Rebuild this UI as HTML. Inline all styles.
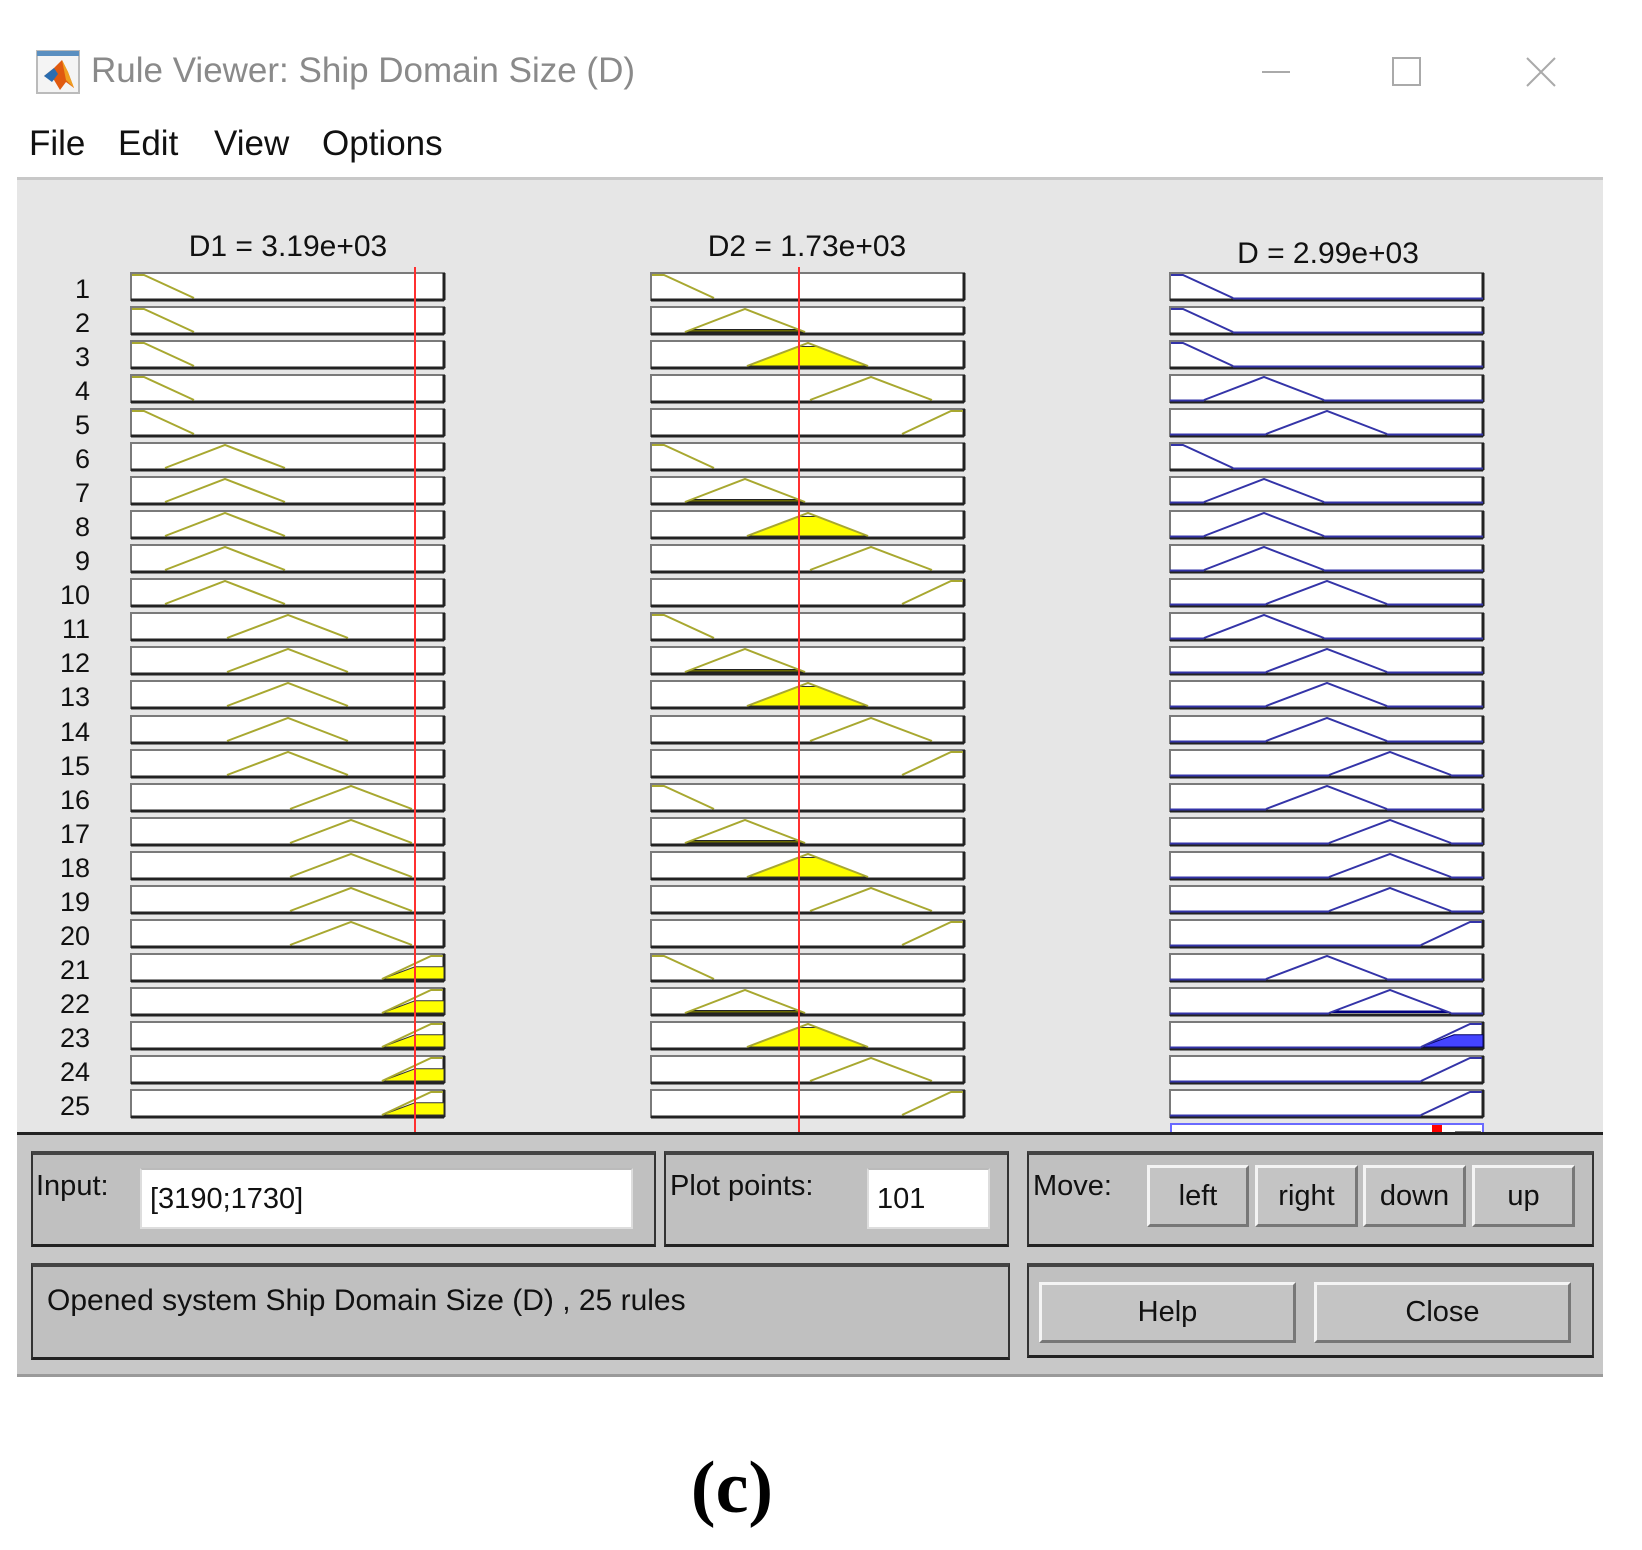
<!DOCTYPE html>
<html><head><meta charset="utf-8">
<style>
*{margin:0;padding:0;box-sizing:border-box}
body{width:1642px;height:1550px;background:#fff;position:relative;overflow:hidden;font-family:"Liberation Sans",Arial,sans-serif}
.a{position:absolute}
.grp{position:absolute;background:#c0c0c0;border:2px solid #333;border-top:4px solid #444;border-bottom:3px solid #222}
.fld{position:absolute;background:#fff;border:2px solid #ddd;border-top-color:#bbb;font-size:29px;color:#111;padding-left:8px;line-height:58px}
.btn{position:absolute;background:#c4c4c4;border:3px solid;border-color:#f4f4f4 #777 #777 #f4f4f4;font-size:29px;color:#111;text-align:center}
.lbl{position:absolute;font-size:29px;color:#111}
</style></head><body>
<svg class="a" style="left:36px;top:50px" width="44" height="44" viewBox="0 0 44 44">
<rect x="1" y="1" width="42" height="42" fill="#f4f4f4" stroke="#bbb" stroke-width="2"/>
<rect x="1" y="1" width="42" height="5" fill="#5a8fc0"/>
<path d="M8 26 L18 18 L26 10 L32 22 L38 38 L30 32 L24 40 L18 30 Z" fill="#e05a10"/>
<path d="M8 26 L18 18 L22 24 L16 32 Z" fill="#2a6db0"/>
<path d="M26 10 L32 22 L38 38 L30 30 Z" fill="#f0a020"/>
</svg>
<div class="a" style="left:91px;top:49px;font-size:35px;color:#8a8a8a;line-height:44px">Rule Viewer: Ship Domain Size (D)</div>
<svg class="a" style="left:1250px;top:50px" width="330" height="45">
<path d="M12 22H40" stroke="#aaa" stroke-width="2"/>
<rect x="143" y="8" width="27" height="27" fill="none" stroke="#aaa" stroke-width="2"/>
<path d="M277 8L305 36M305 8L277 36" stroke="#aaa" stroke-width="2"/>
</svg>
<div class="a" style="left:29px;top:123px;font-size:35px;color:#111;line-height:42px">File</div>
<div class="a" style="left:118px;top:123px;font-size:35px;color:#111;line-height:42px">Edit</div>
<div class="a" style="left:214px;top:123px;font-size:35px;color:#111;line-height:42px">View</div>
<div class="a" style="left:322px;top:123px;font-size:35px;color:#111;line-height:42px">Options</div>
<div class="a" style="left:17px;top:177px;width:1586px;height:3px;background:#c8c8c8"></div>
<div class="a" style="left:17px;top:180px;width:1586px;height:954px;background:#e6e6e6"></div>
<svg class="a" style="left:0;top:0" width="1642" height="1140">
<defs>
<g id="bx"><rect x="0" y="0" width="313" height="27" fill="#fff" stroke="#7a7a7a" stroke-width="2"/><path d="M0 27H313M313 0V27" stroke="#222" stroke-width="3" fill="none"/></g>
<path id="z" d="M1 2H13L63 25"/>
<path id="ma" d="M34 25L94 2L154 25"/>
<path id="mb" d="M96 25L157 2L217 25"/>
<path id="mc" d="M159 25L220 2L281 25"/>
<path id="r" d="M251 25L300 2H312"/>
<polygon id="fr" points="251,25 284,12.8 313,12.8 313,25" fill="#ffff00" stroke="#333" stroke-width="1"/>
<polygon id="fa" points="34,25 40,22.5 148,22.5 154,25" fill="#6a6a00" stroke="#222" stroke-width="1"/>
<polygon id="fb" points="96,25 148,5.5 166,5.5 217,25" fill="#ffff00" stroke="#333" stroke-width="1"/>
<path id="bz" d="M63 25.5H313"/>
<path id="ba" d="M154 25.5H313M0 25.5H34"/>
<path id="bb" d="M217 25.5H313M0 25.5H96"/>
<path id="bc" d="M281 25.5H313M0 25.5H159"/>
<path id="br" d="M0 25.5H251"/>
</defs>
<g font-family="Liberation Sans, Arial, sans-serif" font-size="30" fill="#111">
<text x="288" y="256" text-anchor="middle">D1 = 3.19e+03</text>
<text x="807" y="256" text-anchor="middle">D2 = 1.73e+03</text>
<text x="1328" y="263" text-anchor="middle">D = 2.99e+03</text>
</g>
<g font-family="Liberation Sans, Arial, sans-serif" font-size="27" fill="#111" text-anchor="end">
<text x="90" y="298">1</text><text x="90" y="332">2</text><text x="90" y="366">3</text><text x="90" y="400">4</text><text x="90" y="434">5</text>
<text x="90" y="468">6</text><text x="90" y="502">7</text><text x="90" y="536">8</text><text x="90" y="570">9</text><text x="90" y="604">10</text>
<text x="90" y="638">11</text><text x="90" y="672">12</text><text x="90" y="706">13</text><text x="90" y="741">14</text><text x="90" y="775">15</text>
<text x="90" y="809">16</text><text x="90" y="843">17</text><text x="90" y="877">18</text><text x="90" y="911">19</text><text x="90" y="945">20</text>
<text x="90" y="979">21</text><text x="90" y="1013">22</text><text x="90" y="1047">23</text><text x="90" y="1081">24</text><text x="90" y="1115">25</text>
</g>
<g>
<g transform="translate(0,273)"><use href="#bx" x="131"/><use href="#bx" x="651"/><use href="#bx" x="1170"/></g>
<g transform="translate(0,307)"><use href="#bx" x="131"/><use href="#bx" x="651"/><use href="#bx" x="1170"/></g>
<g transform="translate(0,341)"><use href="#bx" x="131"/><use href="#bx" x="651"/><use href="#bx" x="1170"/></g>
<g transform="translate(0,375)"><use href="#bx" x="131"/><use href="#bx" x="651"/><use href="#bx" x="1170"/></g>
<g transform="translate(0,409)"><use href="#bx" x="131"/><use href="#bx" x="651"/><use href="#bx" x="1170"/></g>
<g transform="translate(0,443)"><use href="#bx" x="131"/><use href="#bx" x="651"/><use href="#bx" x="1170"/></g>
<g transform="translate(0,477)"><use href="#bx" x="131"/><use href="#bx" x="651"/><use href="#bx" x="1170"/></g>
<g transform="translate(0,511)"><use href="#bx" x="131"/><use href="#bx" x="651"/><use href="#bx" x="1170"/></g>
<g transform="translate(0,545)"><use href="#bx" x="131"/><use href="#bx" x="651"/><use href="#bx" x="1170"/></g>
<g transform="translate(0,579)"><use href="#bx" x="131"/><use href="#bx" x="651"/><use href="#bx" x="1170"/></g>
<g transform="translate(0,613)"><use href="#bx" x="131"/><use href="#bx" x="651"/><use href="#bx" x="1170"/></g>
<g transform="translate(0,647)"><use href="#bx" x="131"/><use href="#bx" x="651"/><use href="#bx" x="1170"/></g>
<g transform="translate(0,681)"><use href="#bx" x="131"/><use href="#bx" x="651"/><use href="#bx" x="1170"/></g>
<g transform="translate(0,716)"><use href="#bx" x="131"/><use href="#bx" x="651"/><use href="#bx" x="1170"/></g>
<g transform="translate(0,750)"><use href="#bx" x="131"/><use href="#bx" x="651"/><use href="#bx" x="1170"/></g>
<g transform="translate(0,784)"><use href="#bx" x="131"/><use href="#bx" x="651"/><use href="#bx" x="1170"/></g>
<g transform="translate(0,818)"><use href="#bx" x="131"/><use href="#bx" x="651"/><use href="#bx" x="1170"/></g>
<g transform="translate(0,852)"><use href="#bx" x="131"/><use href="#bx" x="651"/><use href="#bx" x="1170"/></g>
<g transform="translate(0,886)"><use href="#bx" x="131"/><use href="#bx" x="651"/><use href="#bx" x="1170"/></g>
<g transform="translate(0,920)"><use href="#bx" x="131"/><use href="#bx" x="651"/><use href="#bx" x="1170"/></g>
<g transform="translate(0,954)"><use href="#bx" x="131"/><use href="#bx" x="651"/><use href="#bx" x="1170"/></g>
<g transform="translate(0,988)"><use href="#bx" x="131"/><use href="#bx" x="651"/><use href="#bx" x="1170"/></g>
<g transform="translate(0,1022)"><use href="#bx" x="131"/><use href="#bx" x="651"/><use href="#bx" x="1170"/></g>
<g transform="translate(0,1056)"><use href="#bx" x="131"/><use href="#bx" x="651"/><use href="#bx" x="1170"/></g>
<g transform="translate(0,1090)"><use href="#bx" x="131"/><use href="#bx" x="651"/><use href="#bx" x="1170"/></g>
</g>
<use href="#fr" x="131" y="954"/><use href="#fr" x="131" y="988"/><use href="#fr" x="131" y="1022"/><use href="#fr" x="131" y="1056"/><use href="#fr" x="131" y="1090"/>
<use href="#fa" x="651" y="307"/><use href="#fb" x="651" y="341"/>
<use href="#fa" x="651" y="477"/><use href="#fb" x="651" y="511"/>
<use href="#fa" x="651" y="647"/><use href="#fb" x="651" y="681"/>
<use href="#fa" x="651" y="818"/><use href="#fb" x="651" y="852"/>
<use href="#fa" x="651" y="988"/><use href="#fb" x="651" y="1022"/>
<polygon points="159,25 165,22.5 275,22.5 281,25" fill="#000080" transform="translate(1170,988)"/>
<polygon points="251,25 284,12.8 313,12.8 313,25" fill="#4444ff" stroke="#000060" stroke-width="1" transform="translate(1170,1022)"/>
<g stroke="#a8a830" stroke-width="2" fill="none">
<use href="#z" x="131" y="273"/><use href="#z" x="131" y="307"/><use href="#z" x="131" y="341"/><use href="#z" x="131" y="375"/><use href="#z" x="131" y="409"/>
<use href="#ma" x="131" y="443"/><use href="#ma" x="131" y="477"/><use href="#ma" x="131" y="511"/><use href="#ma" x="131" y="545"/><use href="#ma" x="131" y="579"/>
<use href="#mb" x="131" y="613"/><use href="#mb" x="131" y="647"/><use href="#mb" x="131" y="681"/><use href="#mb" x="131" y="716"/><use href="#mb" x="131" y="750"/>
<use href="#mc" x="131" y="784"/><use href="#mc" x="131" y="818"/><use href="#mc" x="131" y="852"/><use href="#mc" x="131" y="886"/><use href="#mc" x="131" y="920"/>
<use href="#r" x="131" y="954"/><use href="#r" x="131" y="988"/><use href="#r" x="131" y="1022"/><use href="#r" x="131" y="1056"/><use href="#r" x="131" y="1090"/>
<use href="#z" x="651" y="273"/><use href="#ma" x="651" y="307"/><use href="#mb" x="651" y="341"/><use href="#mc" x="651" y="375"/><use href="#r" x="651" y="409"/>
<use href="#z" x="651" y="443"/><use href="#ma" x="651" y="477"/><use href="#mb" x="651" y="511"/><use href="#mc" x="651" y="545"/><use href="#r" x="651" y="579"/>
<use href="#z" x="651" y="613"/><use href="#ma" x="651" y="647"/><use href="#mb" x="651" y="681"/><use href="#mc" x="651" y="716"/><use href="#r" x="651" y="750"/>
<use href="#z" x="651" y="784"/><use href="#ma" x="651" y="818"/><use href="#mb" x="651" y="852"/><use href="#mc" x="651" y="886"/><use href="#r" x="651" y="920"/>
<use href="#z" x="651" y="954"/><use href="#ma" x="651" y="988"/><use href="#mb" x="651" y="1022"/><use href="#mc" x="651" y="1056"/><use href="#r" x="651" y="1090"/>
</g>
<g stroke="#3434a8" stroke-width="2" fill="none">
<use href="#z" x="1170" y="273"/><use href="#bz" x="1170" y="273"/>
<use href="#z" x="1170" y="307"/><use href="#bz" x="1170" y="307"/>
<use href="#z" x="1170" y="341"/><use href="#bz" x="1170" y="341"/>
<use href="#ma" x="1170" y="375"/><use href="#ba" x="1170" y="375"/>
<use href="#mb" x="1170" y="409"/><use href="#bb" x="1170" y="409"/>
<use href="#z" x="1170" y="443"/><use href="#bz" x="1170" y="443"/>
<use href="#ma" x="1170" y="477"/><use href="#ba" x="1170" y="477"/>
<use href="#ma" x="1170" y="511"/><use href="#ba" x="1170" y="511"/>
<use href="#ma" x="1170" y="545"/><use href="#ba" x="1170" y="545"/>
<use href="#mb" x="1170" y="579"/><use href="#bb" x="1170" y="579"/>
<use href="#ma" x="1170" y="613"/><use href="#ba" x="1170" y="613"/>
<use href="#mb" x="1170" y="647"/><use href="#bb" x="1170" y="647"/>
<use href="#mb" x="1170" y="681"/><use href="#bb" x="1170" y="681"/>
<use href="#mb" x="1170" y="716"/><use href="#bb" x="1170" y="716"/>
<use href="#mc" x="1170" y="750"/><use href="#bc" x="1170" y="750"/>
<use href="#mb" x="1170" y="784"/><use href="#bb" x="1170" y="784"/>
<use href="#mc" x="1170" y="818"/><use href="#bc" x="1170" y="818"/>
<use href="#mc" x="1170" y="852"/><use href="#bc" x="1170" y="852"/>
<use href="#mc" x="1170" y="886"/><use href="#bc" x="1170" y="886"/>
<use href="#r" x="1170" y="920"/><use href="#br" x="1170" y="920"/>
<use href="#mb" x="1170" y="954"/><use href="#bb" x="1170" y="954"/>
<use href="#mc" x="1170" y="988"/><use href="#bc" x="1170" y="988"/>
<use href="#r" x="1170" y="1022"/><use href="#br" x="1170" y="1022"/>
<use href="#r" x="1170" y="1056"/><use href="#br" x="1170" y="1056"/>
<use href="#r" x="1170" y="1090"/><use href="#br" x="1170" y="1090"/>
</g>
<rect x="1171" y="1124" width="312" height="14" fill="#fff" stroke="#6a6aff" stroke-width="2"/>
<rect x="1432" y="1125" width="10" height="9" fill="#ff0000"/>
<rect x="1455" y="1131" width="26" height="3" fill="#777"/>
<path d="M415 267V1133M799 267V1133" stroke="#ff3030" stroke-width="2"/>
<rect x="17" y="1132" width="1586" height="3" fill="#222"/>
</svg>
<div class="a" style="left:17px;top:1135px;width:1586px;height:242px;background:#c8c8c8;border-bottom:3px solid #9a9a9a"></div>
<div class="grp" style="left:31px;top:1151px;width:625px;height:96px"></div>
<div class="lbl" style="left:36px;top:1170px">Input:</div>
<div class="fld" style="left:140px;top:1168px;width:493px;height:61px">[3190;1730]</div>
<div class="grp" style="left:664px;top:1151px;width:345px;height:96px"></div>
<div class="lbl" style="left:670px;top:1170px">Plot points:</div>
<div class="fld" style="left:867px;top:1168px;width:123px;height:61px">101</div>
<div class="grp" style="left:1027px;top:1151px;width:567px;height:96px"></div>
<div class="lbl" style="left:1033px;top:1170px">Move:</div>
<div class="btn" style="left:1147px;top:1165px;width:102px;height:62px;line-height:56px">left</div>
<div class="btn" style="left:1255px;top:1165px;width:103px;height:62px;line-height:56px">right</div>
<div class="btn" style="left:1363px;top:1165px;width:103px;height:62px;line-height:56px">down</div>
<div class="btn" style="left:1472px;top:1165px;width:103px;height:62px;line-height:56px">up</div>
<div class="grp" style="left:31px;top:1263px;width:979px;height:97px"></div>
<div class="lbl" style="left:47px;top:1284px;font-size:30px">Opened system Ship Domain Size (D) , 25 rules</div>
<div class="grp" style="left:1027px;top:1263px;width:567px;height:95px"></div>
<div class="btn" style="left:1039px;top:1282px;width:257px;height:61px;line-height:55px">Help</div>
<div class="btn" style="left:1314px;top:1282px;width:257px;height:61px;line-height:55px">Close</div>
<div class="a" style="left:632px;top:1440px;width:200px;text-align:center;font-family:'Liberation Serif',serif;font-weight:bold;font-size:74px;line-height:96px;color:#000">(c)</div>
</body></html>
